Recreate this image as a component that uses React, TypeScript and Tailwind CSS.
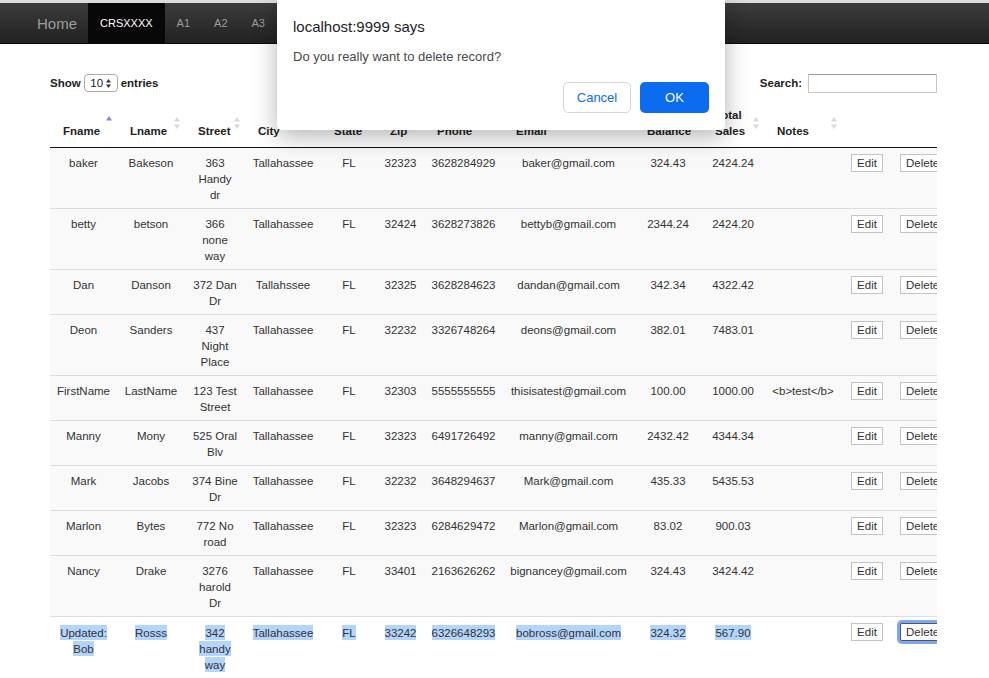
import React from "react";

type Col = { label: string; w: string; sort?: "asc" | "both" };

const cols: Col[] = [
  { label: "Fname", w: "w-[67px]", sort: "asc" },
  { label: "Lname", w: "w-[68px]", sort: "both" },
  { label: "Street", w: "w-[60px]", sort: "both" },
  { label: "City", w: "w-[76px]", sort: "both" },
  { label: "State", w: "w-[56px]", sort: "both" },
  { label: "Zip", w: "w-[47px]", sort: "both" },
  { label: "Phone", w: "w-[79px]", sort: "both" },
  { label: "Email", w: "w-[131px]", sort: "both" },
  { label: "Balance", w: "w-[68px]", sort: "both" },
  { label: "Total Sales", w: "w-[62px]", sort: "both" },
  { label: "Notes", w: "w-[78px]", sort: "both" },
  { label: "", w: "w-[50px]" },
  { label: "", w: "w-[58px]" },
];

const rows: string[][] = [
  ["baker", "Bakeson", "363 Handy dr", "Tallahassee", "FL", "32323", "3628284929", "baker@gmail.com", "324.43", "2424.24", ""],
  ["betty", "betson", "366 none way", "Tallahassee", "FL", "32424", "3628273826", "bettyb@gmail.com", "2344.24", "2424.20", ""],
  ["Dan", "Danson", "372 Dan Dr", "Tallahssee", "FL", "32325", "3628284623", "dandan@gmail.com", "342.34", "4322.42", ""],
  ["Deon", "Sanders", "437 Night Place", "Tallahassee", "FL", "32232", "3326748264", "deons@gmail.com", "382.01", "7483.01", ""],
  ["FirstName", "LastName", "123 Test Street", "Tallahassee", "FL", "32303", "5555555555", "thisisatest@gmail.com", "100.00", "1000.00", "<b>test</b>"],
  ["Manny", "Mony", "525 Oral Blv", "Tallahassee", "FL", "32323", "6491726492", "manny@gmail.com", "2432.42", "4344.34", ""],
  ["Mark", "Jacobs", "374 Bine Dr", "Tallahassee", "FL", "32232", "3648294637", "Mark@gmail.com", "435.33", "5435.53", ""],
  ["Marlon", "Bytes", "772 No road", "Tallahassee", "FL", "32323", "6284629472", "Marlon@gmail.com", "83.02", "900.03", ""],
  ["Nancy", "Drake", "3276 harold Dr", "Tallahassee", "FL", "33401", "2163626262", "bignancey@gmail.com", "324.43", "3424.42", ""],
  ["Updated: Bob", "Rosss", "342 handy way", "Tallahassee", "FL", "33242", "6326648293", "bobross@gmail.com", "324.32", "567.90", ""],
];

function SortIcon({ kind }: { kind: "asc" | "both" }) {
  if (kind === "asc") {
    return (
      <svg width="6" height="12" viewBox="0 0 6 12" className="absolute right-[5px] top-[18px]">
        <polygon points="3,0 6,4.5 0,4.5" fill="#8585e6" />
      </svg>
    );
  }
  return (
    <svg width="6" height="12" viewBox="0 0 6 12" className="absolute right-[5px] top-[19px]">
      <polygon points="3,0 6,4.5 0,4.5" fill="#dadada" />
      <polygon points="0,7.5 6,7.5 3,12" fill="#dadada" />
    </svg>
  );
}

export default function App() {
  return (
    <div className="relative w-[989px] h-[678px] overflow-hidden bg-white font-['Liberation_Sans',Arial,sans-serif] text-[11.5px] leading-[16px] text-[#333]">
      <div className="h-[3px] bg-[#dcdcdc]" />

      {/* Navbar */}
      <nav className="flex h-[41px] items-stretch border-b border-[#080808] bg-gradient-to-b from-[#3c3c3c] to-[#222]">
        <div className="ml-[37px] flex w-[51px] items-center pt-[1px] text-[15px] text-[#9d9d9d]">Home</div>
        <div className="flex items-center bg-[#080808] px-[12px] text-[11px] text-white">CRSXXXX</div>
        {["A1", "A2", "A3"].map((a) => (
          <div key={a} className="flex items-center px-[12px] text-[11px] text-[#9d9d9d]">
            {a}
          </div>
        ))}
      </nav>

      <div className="pl-[50px]">
        {/* Length + filter */}
        <div className="mt-[29px] flex h-[20px] w-[887px] items-center justify-between font-bold text-[#222]">
          <div className="flex items-center">
            <span>Show</span>
            <span className="mx-[3px] flex h-[18px] w-[34px] items-center justify-center gap-[3px] rounded-[4px] border border-[#a9a9a9] font-normal text-[#222]">
              10
              <svg width="5" height="9" viewBox="0 0 5 9">
                <polygon points="2.5,0 5,3.5 0,3.5" fill="#333" />
                <polygon points="0,5.5 5,5.5 2.5,9" fill="#333" />
              </svg>
            </span>
            <span>entries</span>
          </div>
          <div className="flex items-center">
            <span>Search:</span>
            <div className="ml-[6px] h-[19px] w-[129px] border border-[#c8c8c8] border-t-[#9a9a9a] bg-white" />
          </div>
        </div>

        {/* Table */}
        <div className="mt-[5px] w-[887px] overflow-hidden">
          <table className="w-[900px] table-fixed border-collapse">
            <colgroup>
              {cols.map((c, i) => (
                <col key={i} className={c.w} />
              ))}
            </colgroup>
            <thead>
              <tr className="border-b border-[#111]">
                {cols.map((c, i) => (
                  <th
                    key={i}
                    className="relative pb-[8px] pl-[13px] pr-[17px] pt-[9px] text-left align-bottom font-bold text-[#222]"
                  >
                    {c.label}
                    {c.sort && <SortIcon kind={c.sort} />}
                  </th>
                ))}
              </tr>
            </thead>
            <tbody>
              {rows.map((r, ri) => {
                const last = ri === rows.length - 1;
                return (
                  <tr key={ri} className={`${ri > 0 ? "border-t border-[#ddd]" : ""} ${last ? "bg-white" : "bg-[#f9f9f9]"}`}>
                    {r.map((v, ci) => (
                      <td
                        key={ci}
                        className={`${ci === 2 ? "px-[7px]" : "px-[6px]"} pb-[5px] pt-[7px] text-center align-top`}
                      >
                        {last && v ? (
                          <span className="box-decoration-clone bg-[#b3d4fc] py-[1.5px]">{v}</span>
                        ) : (
                          v
                        )}
                      </td>
                    ))}
                    <td className="px-[6px] pb-[5px] pt-[6px] text-center align-top">
                      <button className="h-[18px] border border-[#c4c4c4] bg-white px-[5px] text-[11.5px] leading-[16px] text-[#333]">
                        Edit
                      </button>
                    </td>
                    <td className="px-[6px] pb-[5px] pt-[6px] text-left align-top">
                      <button
                        className={`ml-[2px] h-[18px] border bg-white px-[5px] text-[11.5px] leading-[16px] text-[#333] ${
                          last ? "rounded-[2px] border-[#555] shadow-[0_0_0_3px_#7aa8f2]" : "border-[#c4c4c4]"
                        }`}
                      >
                        Delete
                      </button>
                    </td>
                  </tr>
                );
              })}
            </tbody>
          </table>
        </div>
      </div>

      {/* Confirm dialog */}
      <div className="absolute left-[277px] top-0 h-[130px] w-[448px] rounded-b-[5px] bg-white px-[16px] shadow-[0_6px_24px_rgba(0,0,0,0.3)]">
        <div className="pt-[18px] text-[15px] leading-[18px] text-[#1e1e1e]">localhost:9999 says</div>
        <div className="mt-[12px] text-[13px] leading-[18px] text-[#4a4a4a]">Do you really want to delete record?</div>
        <div className="mt-[16px] flex justify-end gap-[9px]">
          <button className="h-[31px] w-[68px] rounded-[5px] border border-[#d4d4d4] bg-white text-[13px] text-[#0b6cf0]">
            Cancel
          </button>
          <button className="h-[31px] w-[69px] rounded-[5px] bg-[#0b6cf0] text-[13px] text-white">OK</button>
        </div>
      </div>
    </div>
  );
}
